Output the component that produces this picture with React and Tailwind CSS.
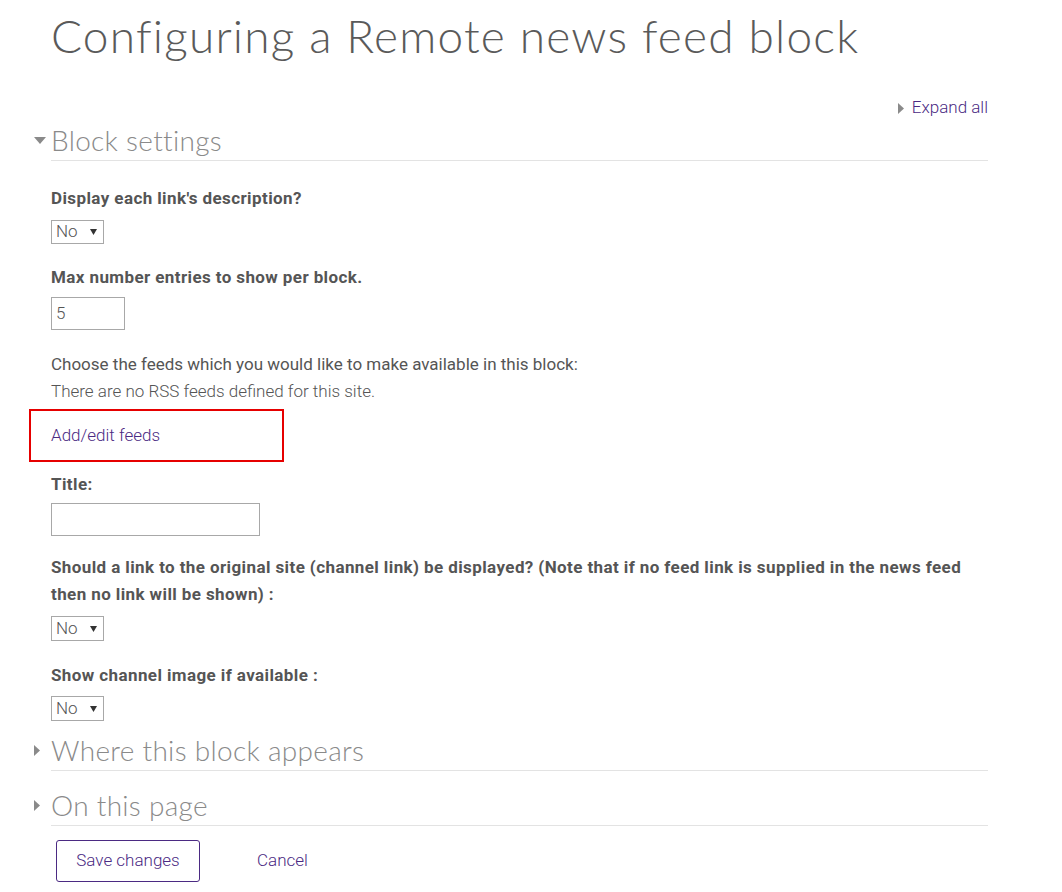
import React from 'react';

const Caret = ({ open }) => (
  <span className="w-[17px] shrink-0 flex items-center justify-start">
    {open ? (
      <svg width="12" height="7" viewBox="0 0 12 7"><path d="M0 0 L12 0 L6 7 Z" fill="#8a8a8a" /></svg>
    ) : (
      <svg width="6" height="11" viewBox="0 0 6 11"><path d="M0 0 L6 5.5 L0 11 Z" fill="#8a8a8a" /></svg>
    )}
  </span>
);

const SelectNo = ({ tall }) => (
  <div className={`w-[53px] ${tall ? 'h-[25px]' : 'h-[24px]'} border border-[#a8a8a8] bg-white flex items-center justify-between pl-[4px] pr-[6px] text-[17px] font-light text-[#555]`}>
    <span>No</span>
    <svg width="7" height="6" viewBox="0 0 7 6"><path d="M0 0 L7 0 L3.5 6 Z" fill="#333" /></svg>
  </div>
);

const SectionHead = ({ title, open }) => (
  <div className="border-b border-[#e3e3e3]">
    <div className="flex items-center -ml-[17px] h-[40px]">
      <Caret open={open} />
      <span className="font-['Lato'] font-light text-[28px] text-[#8a8a8a] tracking-[0.3px] leading-none">{title}</span>
    </div>
  </div>
);

export default function App() {
  return (
    <div className="w-[1062px] min-h-[892px] bg-white font-['Roboto',sans-serif] text-[#555]">
      <div className="pl-[51px] pr-[74px]">
        <h1 className="font-['Lato'] font-light text-[46px] text-[#5a5a5a] leading-[56px] pt-[8px] tracking-[1.2px]">
          Configuring a Remote news feed block
        </h1>

        <div className="flex justify-end items-center mt-[32px] h-[24px]">
          <svg width="6" height="11" viewBox="0 0 6 11" className="mr-[8px]"><path d="M0 0 L6 5.5 L0 11 Z" fill="#8a8a8a" /></svg>
          <a className="text-[17px] text-[#4b2a83] font-light">Expand all</a>
        </div>

        <SectionHead title="Block settings" open />

        <div className="pt-[25px]">
          <div className="text-[17px] font-bold leading-[24px] tracking-[0.4px] text-[#555]">Display each link's description?</div>
          <div className="mt-[10px]"><SelectNo /></div>

          <div className="text-[17px] font-bold leading-[24px] tracking-[0.4px] mt-[21px]">Max number entries to show per block.</div>
          <div className="mt-[8px] w-[74px] h-[33px] border border-[#a8a8a8] flex items-center pl-[4px] text-[17px] font-light">5</div>

          <div className="text-[17px] leading-[27px] mt-[21px] text-[#555]">Choose the feeds which you would like to make available in this block:</div>
          <div className="text-[17px] leading-[27px] font-light text-[#555]">There are no RSS feeds defined for this site.</div>

          <div className="-ml-[22px] mt-[4px] w-[255px] h-[53px] border-2 border-[#e60000] flex items-center pl-[20px]">
            <a className="text-[17px] font-light text-[#4b2a83]">Add/edit feeds</a>
          </div>

          <div className="text-[17px] font-bold leading-[24px] tracking-[0.4px] mt-[10px]">Title:</div>
          <div className="mt-[7px] w-[209px] h-[33px] border border-[#a8a8a8]" />

          <div className="text-[17px] font-bold leading-[27px] tracking-[0.4px] mt-[18px] pr-[10px]">
            Should a link to the original site (channel link) be displayed? (Note that if no feed link is supplied in the news feed then no link will be shown) :
          </div>
          <div className="mt-[8px]"><SelectNo tall /></div>

          <div className="text-[17px] font-bold leading-[24px] tracking-[0.4px] mt-[22px]">Show channel image if available :</div>
          <div className="mt-[9px]"><SelectNo tall /></div>
        </div>

        <div className="mt-[9px]">
          <SectionHead title="Where this block appears" />
        </div>
        <div className="mt-[14px]">
          <SectionHead title="On this page" />
        </div>

        <div className="flex items-center mt-[14px] ml-[5px]">
          <button className="w-[144px] h-[42px] border border-[#4b2a83] rounded-[3px] text-[17px] font-light text-[#4b2a83] bg-white">Save changes</button>
          <a className="ml-[57px] text-[17px] font-light text-[#4b2a83]">Cancel</a>
        </div>
      </div>
    </div>
  );
}
